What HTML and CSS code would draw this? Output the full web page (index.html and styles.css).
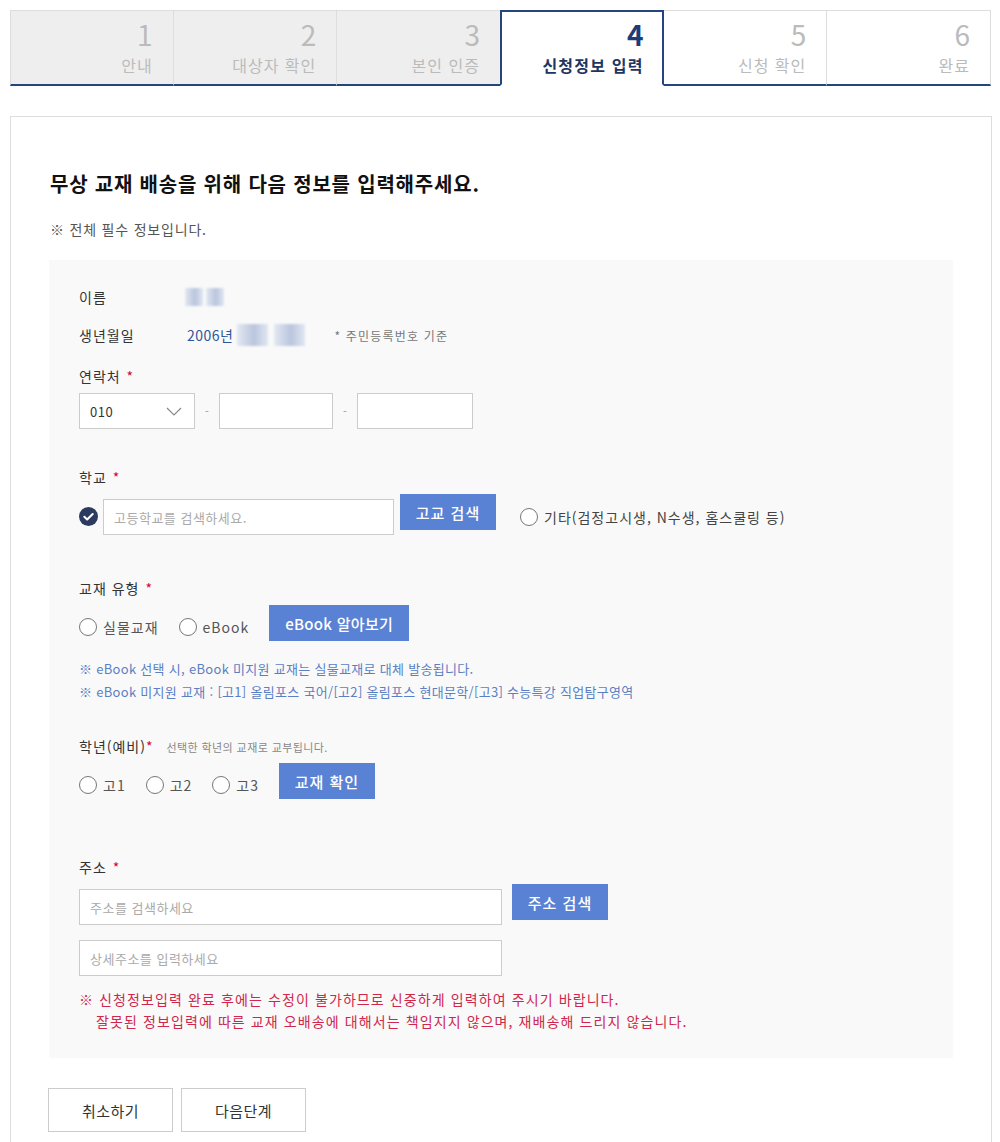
FILE: index.html
```html
<!DOCTYPE html>
<html lang="ko">
<head>
    <meta charset="UTF-8">
    <meta name="viewport" content="width=device-width, initial-scale=1.0">
    <title>신청정보 입력</title>
    <link rel="stylesheet" href="styles.css">
</head>
<body>
    <div class="steps">
        <div class="step done"><span class="num">1</span><span class="name">안내</span></div>
        <div class="step done"><span class="num">2</span><span class="name">대상자 확인</span></div>
        <div class="step done"><span class="num">3</span><span class="name">본인 인증</span></div>
        <div class="step active"><span class="num">4</span><span class="name">신청정보 입력</span></div>
        <div class="step"><span class="num">5</span><span class="name">신청 확인</span></div>
        <div class="step"><span class="num">6</span><span class="name">완료</span></div>
    </div>

    <div class="apply-box">
        <h2 class="title">무상 교재 배송을 위해 다음 정보를 입력해주세요.</h2>
        <p class="guide">※ 전체 필수 정보입니다.</p>

        <div class="form-area">
            <dl class="info-row">
                <dt>이름</dt>
                <dd><span class="blur blur-name"></span><span class="blur blur-name"></span></dd>
            </dl>
            <dl class="info-row">
                <dt>생년월일</dt>
                <dd class="birth">2006년 <span class="blur blur-birth"></span><span class="blur blur-birth"></span><span class="note-small">* 주민등록번호 기준</span></dd>
            </dl>

            <div class="field field-phone">
                <p class="field-label">연락처 <span class="req">*</span></p>
                <div class="phone-row">
                    <div class="select-box">
                        <span>010</span>
                        <svg width="16" height="9" viewBox="0 0 16 9"><path d="M1 1l7 7 7-7" fill="none" stroke="#888" stroke-width="1.2"/></svg>
                    </div>
                    <span class="dash">-</span>
                    <input type="text" class="input phone-mid">
                    <span class="dash">-</span>
                    <input type="text" class="input phone-last">
                </div>
            </div>

            <div class="field field-school">
                <p class="field-label">학교 <span class="req">*</span></p>
                <div class="school-row">
                    <svg class="check-icon" width="19" height="19" viewBox="0 0 20 20"><circle cx="10" cy="10" r="10" fill="#2b3a5f"/><path d="M5.6 10.3l3 2.8 5.8-5.7" fill="none" stroke="#fff" stroke-width="2.2" stroke-linecap="round" stroke-linejoin="round"/></svg>
                    <input type="text" class="input school-input" placeholder="고등학교를 검색하세요.">
                    <button class="btn-blue">고교 검색</button>
                    <label class="radio"><span class="circle"></span>기타(검정고시생, N수생, 홈스쿨링 등)</label>
                </div>
            </div>

            <div class="field field-type">
                <p class="field-label">교재 유형 <span class="req">*</span></p>
                <div class="option-row">
                    <label class="radio"><span class="circle"></span>실물교재</label>
                    <label class="radio"><span class="circle"></span>eBook</label>
                    <button class="btn-blue btn-ebook">eBook 알아보기</button>
                </div>
                <div class="notes-blue">
                    <p>※ eBook 선택 시, eBook 미지원 교재는 실물교재로 대체 발송됩니다.</p>
                    <p>※ eBook 미지원 교재 : [고1] 올림포스 국어/[고2] 올림포스 현대문학/[고3] 수능특강 직업탐구영역</p>
                </div>
            </div>

            <div class="field field-grade">
                <p class="field-label">학년(예비)<span class="req tight">*</span><span class="sub">선택한 학년의 교재로 교부됩니다.</span></p>
                <div class="option-row">
                    <label class="radio"><span class="circle"></span>고1</label>
                    <label class="radio"><span class="circle"></span>고2</label>
                    <label class="radio"><span class="circle"></span>고3</label>
                    <button class="btn-blue">교재 확인</button>
                </div>
            </div>

            <div class="field field-addr">
                <p class="field-label">주소 <span class="req">*</span></p>
                <div class="addr-row">
                    <input type="text" class="input addr-input" placeholder="주소를 검색하세요">
                    <button class="btn-blue">주소 검색</button>
                </div>
                <input type="text" class="input addr-detail" placeholder="상세주소를 입력하세요">
                <div class="notes-red">
                    <p>※ 신청정보입력 완료 후에는 수정이 불가하므로 신중하게 입력하여 주시기 바랍니다.</p>
                    <p class="indent">잘못된 정보입력에 따른 교재 오배송에 대해서는 책임지지 않으며, 재배송해 드리지 않습니다.</p>
                </div>
            </div>
        </div>

        <div class="btn-area">
            <button class="btn-line">취소하기</button>
            <button class="btn-line">다음단계</button>
        </div>
    </div>
</body>
</html>
```

FILE: styles.css
```css
* {
    box-sizing: border-box;
}
body {
    margin: 0;
    font-family: "Noto Sans CJK KR", "Noto Sans", sans-serif;
    color: #333;
    background-color: #fff;
}

/* step bar */
.steps {
    display: flex;
    width: 982px;
    margin: 10px 0 0 10px;
}
.step {
    flex: none;
    width: calc(100% / 6);
    height: 76px;
    padding: 8px 20px 0 0;
    text-align: right;
    background-color: #fff;
    border-top: 1px solid #ddd;
    border-right: 1px solid #ddd;
    border-bottom: 2px solid #23467f;
}
.step:first-child {
    border-left: 1px solid #ddd;
}
.step.done {
    background-color: #eee;
}
.step .num {
    display: block;
    font-size: 28px;
    line-height: 30px;
    color: #bbb;
}
.step .name {
    display: block;
    margin-top: 4px;
    font-size: 16px;
    line-height: 24px;
    letter-spacing: 1px;
    color: #bbb;
}
.step.active {
    margin-left: -1px;
    padding: 7px 18px 0 0;
    border: 2px solid #23467f;
    border-bottom-color: #fff;
}
.step.active .num {
    font-weight: 700;
    color: #1c3d78;
}
.step.active .name {
    font-weight: 700;
    letter-spacing: 1.2px;
    color: #1f3561;
}

/* form box */
.apply-box {
    width: 982px;
    margin: 30px 0 0 10px;
    padding: 53px 38px 40px;
    border: 1px solid #ddd;
    border-bottom: 0;
}
.title {
    margin: 0 0 0 1px;
    font-size: 20px;
    line-height: 28px;
    font-weight: 700;
    letter-spacing: 0.8px;
    color: #111;
}
.guide {
    margin: 21px 0 0 1px;
    font-size: 14px;
    line-height: 20px;
    letter-spacing: 0.8px;
    color: #555;
}
.form-area {
    margin-top: 21px;
    padding: 27px 30px 26px;
    background-color: #f9f9f9;
}

.info-row {
    display: flex;
    align-items: center;
    height: 20px;
    margin: 0;
    font-size: 14px;
    letter-spacing: 1px;
}
.info-row + .info-row {
    margin-top: 18px;
}
.info-row dt {
    width: 106px;
}
.info-row dd {
    display: flex;
    align-items: center;
    margin: 0;
}
.birth {
    color: #2f5597;
    padding-left: 2px;
    letter-spacing: 0.5px;
}
.blur {
    display: inline-block;
    background: linear-gradient(90deg, #e4e9f2 0%, #c8d2e5 35%, #bac6de 55%, #e1e7f1 100%);
    filter: blur(1.3px);
}
.blur-name {
    width: 18px;
    height: 18px;
    margin-right: 3px;
}
.blur-birth {
    width: 31px;
    height: 22px;
    margin-left: 4px;
    margin-right: 2px;
}
.note-small {
    margin-left: 27px;
    font-size: 12px;
    letter-spacing: 1.2px;
    color: #777;
}

.field-label {
    height: 20px;
    margin: 0 0 7px;
    font-size: 14px;
    line-height: 20px;
    letter-spacing: 1px;
}
.req {
    margin-left: 1px;
    color: #d6003a;
}
.req.tight {
    margin-left: 0;
}
.field-label .sub {
    margin-left: 13px;
    font-size: 11px;
    letter-spacing: 0.4px;
    color: #888;
}
.field-phone {
    margin-top: 21px;
}
.field-school {
    margin-top: 38px;
}
.field-type {
    margin-top: 43px;
}
.field-grade {
    margin-top: 33px;
}
.field-addr {
    margin-top: 58px;
}

.input {
    height: 36px;
    padding: 0 10px;
    border: 1px solid #ccc;
    background-color: #fff;
    font-family: inherit;
    font-size: 13px;
    letter-spacing: 0.5px;
    color: #333;
    outline: none;
}
.input::placeholder {
    color: #aaa;
}

.phone-row {
    display: flex;
    align-items: center;
}
.select-box {
    display: flex;
    align-items: center;
    justify-content: space-between;
    width: 116px;
    height: 36px;
    padding: 0 12px 0 10px;
    border: 1px solid #ccc;
    background-color: #fff;
    font-size: 13px;
    letter-spacing: 0.5px;
}
.dash {
    width: 24px;
    text-align: center;
    font-size: 11px;
    color: #999;
}
.phone-mid {
    width: 114px;
}
.phone-last {
    width: 116px;
}

.btn-blue {
    flex: none;
    width: 96px;
    height: 36px;
    padding: 0;
    border: 0;
    background-color: #5a82d4;
    color: #fff;
    font-family: inherit;
    font-size: 15px;
    font-weight: 500;
    letter-spacing: 1px;
    cursor: pointer;
}
.btn-ebook {
    width: 140px;
    letter-spacing: 0.3px;
}

.radio {
    display: inline-flex;
    align-items: center;
    height: 20px;
    margin-right: 20px;
    font-size: 14px;
    letter-spacing: 1px;
    color: #555;
}
.radio .circle {
    width: 18px;
    height: 18px;
    margin-right: 6px;
    border: 1px solid #777;
    border-radius: 50%;
    background-color: #fff;
}

.school-row {
    display: flex;
    align-items: flex-start;
}
.check-icon {
    flex: none;
    margin: 13px 5px 0 0;
}
.school-input {
    width: 291px;
    margin: 5px 6px 0 0;
}
.school-row .radio {
    margin: 13px 0 0 24px;
    color: #444;
}

.option-row {
    display: flex;
    align-items: flex-start;
}
.option-row .radio {
    margin-top: 12px;
}

.notes-blue {
    margin-top: 16px;
    font-size: 13px;
    line-height: 23px;
    letter-spacing: 0.3px;
    color: #5b7fc4;
}
.notes-blue p,
.notes-red p {
    margin: 0;
}

.addr-row {
    display: flex;
    align-items: flex-start;
}
.addr-input {
    width: 423px;
    margin: 5px 10px 0 0;
}
.addr-detail {
    display: block;
    width: 423px;
    margin-top: 15px;
}
.notes-red {
    margin-top: 12px;
    font-size: 14px;
    line-height: 22px;
    letter-spacing: 1.1px;
    color: #d0264c;
}
.notes-red .indent {
    padding-left: 17px;
}

.btn-area {
    display: flex;
    gap: 8px;
    margin: 30px 0 0 -1px;
}
.btn-line {
    width: 125px;
    height: 44px;
    border: 1px solid #ccc;
    background-color: #fff;
    font-family: inherit;
    font-size: 15px;
    letter-spacing: 0.5px;
    color: #333;
    cursor: pointer;
}
```
